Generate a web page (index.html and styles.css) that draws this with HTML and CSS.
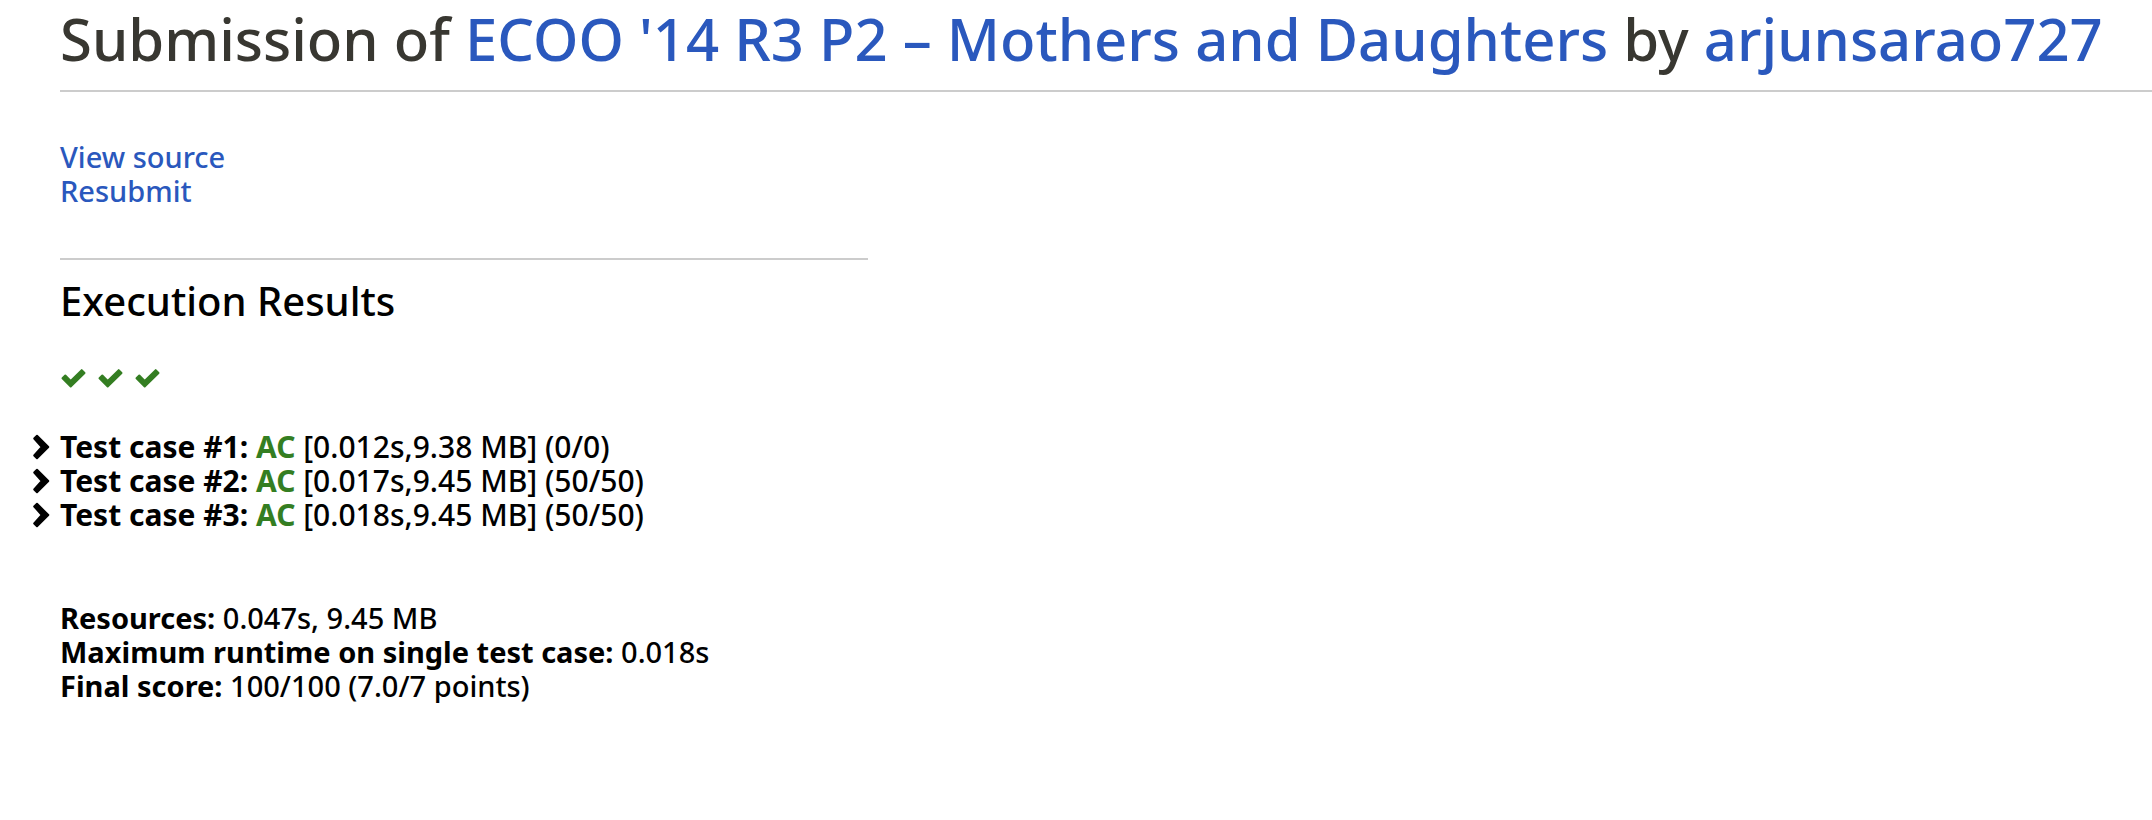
FILE: index.html
```
<!DOCTYPE html>
<html lang="en">
<head>
<meta charset="utf-8">
<title>Submission of ECOO '14 R3 P2 – Mothers and Daughters by arjunsarao727</title>
<link rel="stylesheet" href="styles.css">
</head>
<body>
<svg class="symbols" aria-hidden="true">
  <symbol id="check" viewBox="0 0 26 20"><path d="M2.5 10.3L5.3 7.5L10.7 12.9L21.7 2.1L24.5 5L10.7 18.5Z" fill="currentColor" stroke="currentColor" stroke-width="2" stroke-linejoin="round"/></symbol>
  <symbol id="chevron" viewBox="0 0 18 26"><path d="M5 1.8L16.3 13L5 24.2L2.2 21.5L9.8 13L2.2 4.5Z" fill="currentColor" stroke="currentColor" stroke-width="2" stroke-linejoin="round"/></symbol>
</svg>
<main class="page">
  <h1 class="title">Submission of <a href="#problem">ECOO '14 R3 P2 – Mothers and Daughters</a> by <a href="#user">arjunsarao727</a></h1>
  <nav class="links">
    <a href="#source">View source</a>
    <a href="#resubmit">Resubmit</a>
  </nav>
  <hr class="divider">
  <h2 class="heading">Execution Results</h2>
  <div class="checks">
    <svg class="check"><use href="#check"/></svg>
    <svg class="check"><use href="#check"/></svg>
    <svg class="check"><use href="#check"/></svg>
  </div>
  <ul class="cases">
    <li class="case"><svg class="chevron"><use href="#chevron"/></svg><span><b>Test case #1: <span class="ac">AC</span></b> [0.012s,9.38 MB] (0/0)</span></li>
    <li class="case"><svg class="chevron"><use href="#chevron"/></svg><span><b>Test case #2: <span class="ac">AC</span></b> [0.017s,9.45 MB] (50/50)</span></li>
    <li class="case"><svg class="chevron"><use href="#chevron"/></svg><span><b>Test case #3: <span class="ac">AC</span></b> [0.018s,9.45 MB] (50/50)</span></li>
  </ul>
  <div class="summary">
    <div><b>Resources:</b> 0.047s, 9.45 MB</div>
    <div><b>Maximum runtime on single test case:</b> 0.018s</div>
    <div><b>Final score:</b> 100/100 (7.0/7 points)</div>
  </div>
</main>
</body>
</html>
```
FILE: styles.css
```
body { margin: 0; background: #fff; color: #000; font: 500 29px/34px "Noto Sans", "Open Sans", sans-serif; }
b { font-weight: 700; }
a { color: #2a58bd; text-decoration: none; }
.symbols { position: absolute; width: 0; height: 0; }
.page { padding-left: 60px; }
.title { margin: 0; padding: 3px 0 15px; border-bottom: 2px solid #ccc; color: #383731; font-size: 58px; line-height: 72px; font-weight: 500; white-space: nowrap; }
.links { display: flex; flex-direction: column; align-items: flex-start; margin-top: 48px; }
.divider { width: 808px; max-width: 100%; margin: 50px 0 19px; border: 0; border-top: 2px solid #ccc; }
.heading { margin: 0; font-size: 40px; line-height: 44px; font-weight: 500; }
.checks { display: flex; gap: 11px; margin-top: 45px; color: #347e22; }
.check { width: 26px; height: 20px; }
.cases { list-style: none; margin: 42px 0 69px -28px; padding: 0; font-size: 30px; }
.case { display: flex; align-items: center; gap: 10px; }
.chevron { width: 18px; height: 26px; }
.ac { color: #347e22; }
```
